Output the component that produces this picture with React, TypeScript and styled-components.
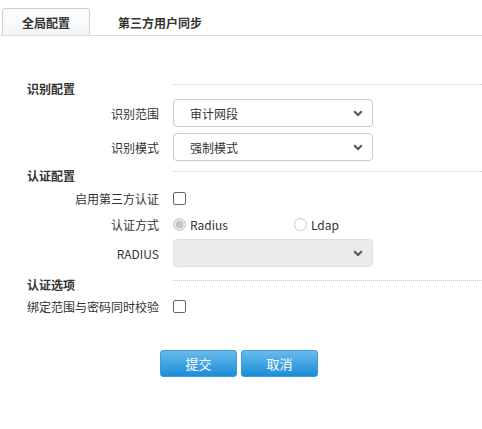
import React from "react";
import styled, { createGlobalStyle } from "styled-components";

const Global = createGlobalStyle`
  html, body { margin: 0; padding: 0; background: #fff; }
  body { font-family: "Noto Sans CJK SC", "Noto Sans", sans-serif; color: #333; }
  * { box-sizing: border-box; }
`;

const Page = styled.div`
  width: 482px;
  height: 429px;
  background: #fff;
  overflow: hidden;
`;

const TabBar = styled.div`
  display: flex;
  align-items: flex-end;
  height: 36px;
  padding-top: 8px;
  padding-left: 2px;
  border-bottom: 1px solid #dcdcdc;
`;

const Tab = styled.div<{ $active?: boolean }>`
  width: ${(p) => (p.$active ? "88px" : "140px")};
  height: 27px;
  display: flex;
  align-items: center;
  justify-content: center;
  font-size: 12px;
  font-weight: 700;
  color: #333;
  border: 1px solid ${(p) => (p.$active ? "#cfcfcf" : "transparent")};
  border-bottom: none;
  border-radius: 4px 4px 0 0;
  background: ${(p) => (p.$active ? "linear-gradient(#ffffff, #f4f4f4)" : "transparent")};
`;

const Form = styled.div`
  display: flex;
  flex-direction: column;
  padding-top: 45px;
  padding-left: 27px;
`;

const Header = styled.div<{ $mt?: number }>`
  display: grid;
  grid-template-columns: 146px 1fr;
  height: 18px;
  margin-top: ${(p) => p.$mt ?? 0}px;
`;

const Title = styled.div`
  font-size: 12px;
  font-weight: 700;
  line-height: 16px;
  color: #333;
  white-space: nowrap;
`;

const Rule = styled.div`
  margin-top: 3px;
  border-top: 1px dotted #c8c8c8;
  height: 0;
`;

const Row = styled.div<{ $h: number; $mt?: number }>`
  display: grid;
  grid-template-columns: 132px 1fr;
  column-gap: 14px;
  align-items: center;
  height: ${(p) => p.$h}px;
  margin-top: ${(p) => p.$mt ?? 0}px;
`;

const Label = styled.div`
  font-size: 12px;
  text-align: right;
  color: #333;
  white-space: nowrap;
`;

const SelectBox = styled.div<{ $disabled?: boolean }>`
  width: 200px;
  height: 28px;
  border: 1px solid ${(p) => (p.$disabled ? "#dedede" : "#c9c9c9")};
  border-radius: 4px;
  background: ${(p) => (p.$disabled ? "#ebebeb" : "#fff")};
  display: flex;
  align-items: center;
  justify-content: space-between;
  padding: 0 9px 0 16px;
  font-size: 12px;
  color: #333;
`;

const Check = styled.span`
  display: inline-block;
  width: 13px;
  height: 13px;
  border: 1px solid #666;
  border-radius: 2px;
  background: #fff;
`;

const RadioGroup = styled.div`
  display: flex;
  align-items: center;
`;

const RadioOption = styled.label`
  display: flex;
  align-items: center;
  width: 121px;
  font-size: 12px;
  color: #333;
  gap: 4px;
`;

const RadioDot = styled.span<{ $checked?: boolean }>`
  width: 13px;
  height: 13px;
  border-radius: 50%;
  border: 1px solid #c8c8c8;
  background: ${(p) => (p.$checked ? "radial-gradient(circle, #c4c4c4 0 3.5px, #e6e6e6 4px)" : "#fff")};
  display: inline-block;
`;

const Buttons = styled.div`
  display: flex;
  gap: 4px;
  padding-left: 133px;
  margin-top: 33px;
`;

const Button = styled.button`
  width: 77px;
  height: 27px;
  border: 1px solid #3f9ad6;
  border-radius: 3px;
  background: linear-gradient(#68bbec, #1b8ed7);
  color: #fff;
  font-family: "Noto Sans CJK SC", sans-serif;
  font-size: 13px;
  padding: 0;
`;

const Chevron = () => (
  <svg width="10" height="7" viewBox="0 0 10 7">
    <polyline points="1.2,1.2 5,5 8.8,1.2" fill="none" stroke="#555" strokeWidth="2" />
  </svg>
);

export default function App() {
  return (
    <Page>
      <Global />
      <TabBar>
        <Tab $active>全局配置</Tab>
        <Tab>第三方用户同步</Tab>
      </TabBar>
      <Form>
        <Header>
          <Title>识别配置</Title>
          <Rule />
        </Header>
        <Row $h={28}>
          <Label>识别范围</Label>
          <SelectBox>
            <span>审计网段</span>
            <Chevron />
          </SelectBox>
        </Row>
        <Row $h={28} $mt={6}>
          <Label>识别模式</Label>
          <SelectBox>
            <span>强制模式</span>
            <Chevron />
          </SelectBox>
        </Row>
        <Header $mt={7}>
          <Title>认证配置</Title>
          <Rule />
        </Header>
        <Row $h={24}>
          <Label>启用第三方认证</Label>
          <div style={{ display: "flex" }}>
            <Check />
          </div>
        </Row>
        <Row $h={24} $mt={2}>
          <Label>认证方式</Label>
          <RadioGroup>
            <RadioOption>
              <RadioDot $checked />
              Radius
            </RadioOption>
            <RadioOption>
              <RadioDot />
              Ldap
            </RadioOption>
          </RadioGroup>
        </Row>
        <Row $h={28} $mt={3}>
          <Label>RADIUS</Label>
          <SelectBox $disabled>
            <span />
            <Chevron />
          </SelectBox>
        </Row>
        <Header $mt={10}>
          <Title>认证选项</Title>
          <Rule />
        </Header>
        <Row $h={22}>
          <Label>绑定范围与密码同时校验</Label>
          <div style={{ display: "flex" }}>
            <Check />
          </div>
        </Row>
        <Buttons>
          <Button>提交</Button>
          <Button>取消</Button>
        </Buttons>
      </Form>
    </Page>
  );
}
